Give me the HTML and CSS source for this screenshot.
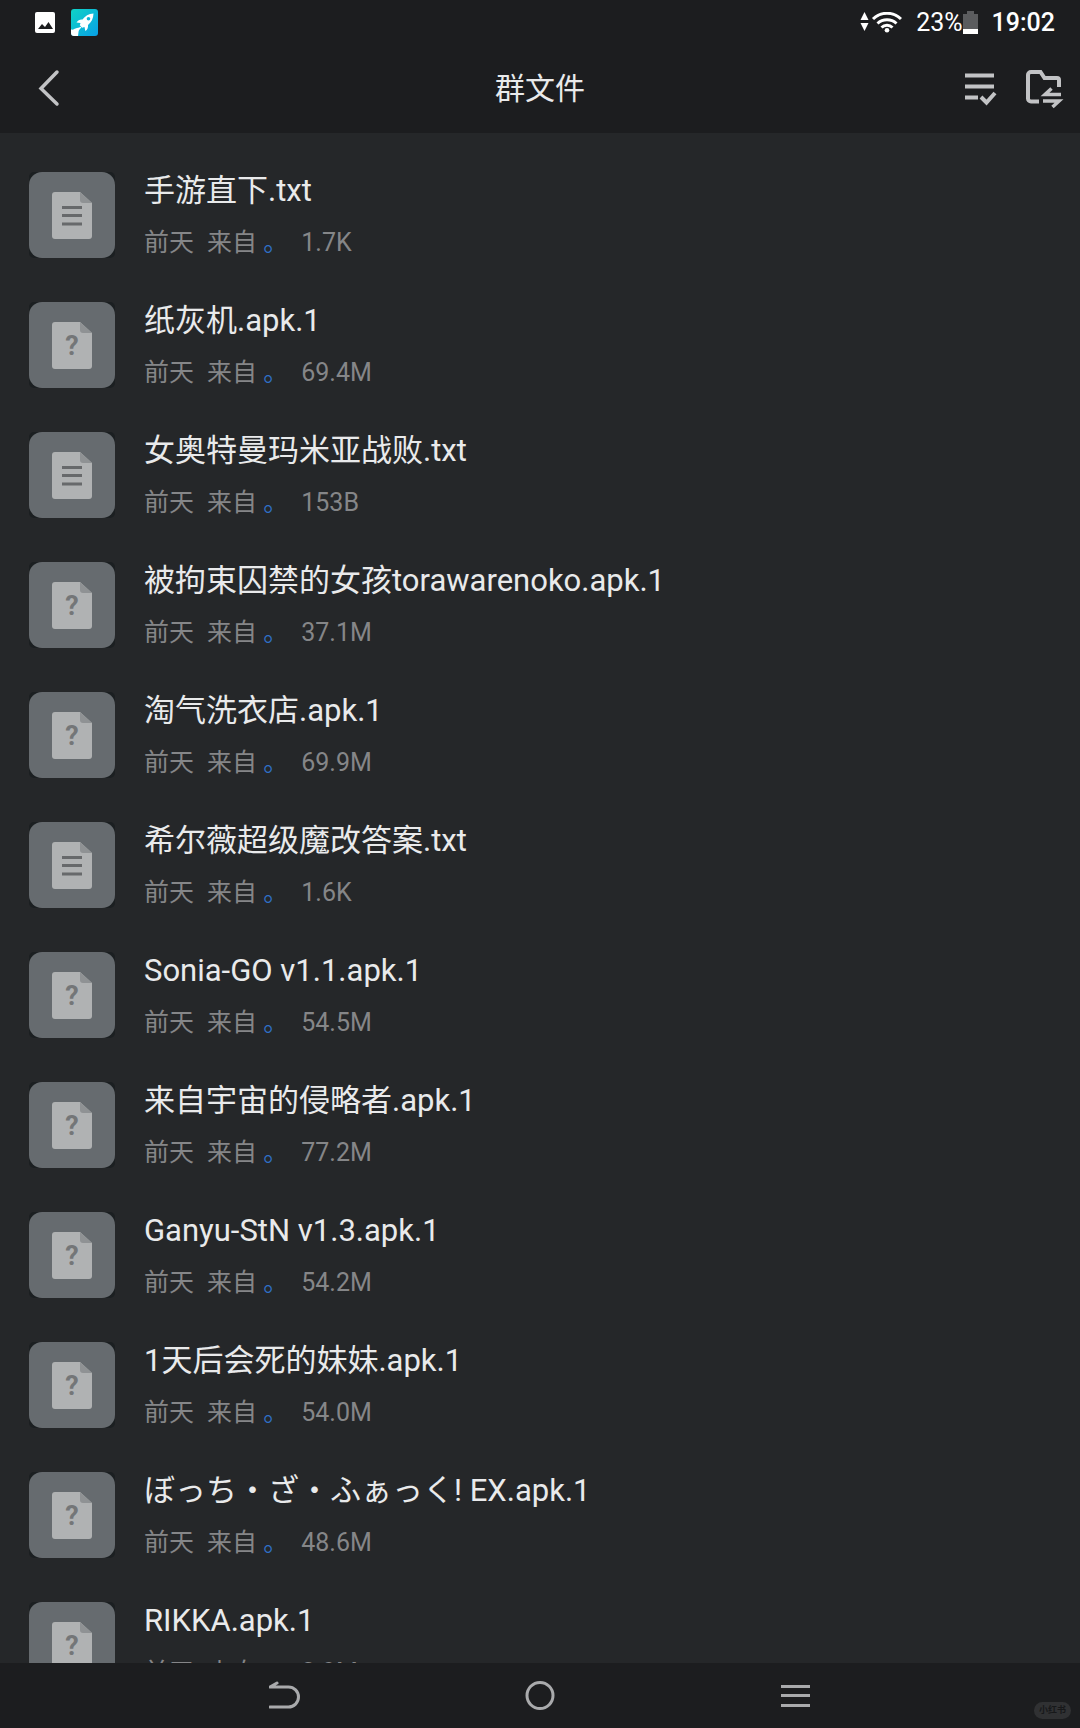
FILE: index.html
```html
<!DOCTYPE html>
<html lang="zh-CN">
	<head>
		<meta charset="UTF-8" />
		<meta name="viewport" content="width=device-width, initial-scale=1" />
		<title>群文件</title>
		<link rel="stylesheet" href="styles.css">
	</head>
	<body>
		<!-- file type icons -->
		<svg class="sprite" aria-hidden="true">
			<symbol id="tile" viewBox="0 0 86 86">
				<rect width="86" height="86" rx="5" fill="#1b1f21" />
				<rect width="86" height="86" rx="13" fill="#666b6f" />
				<path d="M26 20h25l12 11v33a3 3 0 0 1-3 3H26a3 3 0 0 1-3-3V23a3 3 0 0 1 3-3z" fill="#b0b2b3" />
				<path d="M51 20l12 11H54a3 3 0 0 1-3-3z" fill="#8f9294" />
			</symbol>
			<symbol id="txt" viewBox="0 0 86 86">
				<use href="#tile" />
				<path d="M33 35.500h20M33 43.500h20M33 52h20" stroke="#67696b" stroke-width="3" />
			</symbol>
			<symbol id="unknown" viewBox="0 0 86 86">
				<use href="#tile" />
				<text x="43" y="53" text-anchor="middle" class="mark">?</text>
			</symbol>
		</svg>

		<header class="top">
			<div class="status">
				<svg class="photo" viewBox="0 0 20 21" width="20" height="21">
					<rect width="20" height="21" rx="2" fill="#fff" />
					<path d="M3 17l4-5 3 3 3.500-5 4.500 7z" fill="#1c1d1f" />
				</svg>
				<svg class="rocket" viewBox="0 0 27 27" width="27" height="27">
					<defs>
						<linearGradient id="sky" x1="0" y1="0" x2="1" y2="1">
							<stop offset="0" stop-color="#0fd3c6" />
							<stop offset="1" stop-color="#08a0e6" />
						</linearGradient>
					</defs>
					<rect width="27" height="27" rx="3" fill="url(#sky)" />
					<path d="M22.500 4.500c-5 .3-8.500 2.500-11 6-2.500-.3-4.500.6-6 3l4 .6-.7 2.200 2.300 2.400 2.400-.6.8 4c2.200-1.500 3-3.700 2.700-6.200 3.300-2.600 5.400-6.200 5.500-11.400z" fill="#fff" />
					<circle cx="17.500" cy="9.800" r="1.800" fill="#0cb6d8" />
					<path d="M10.500 17.500c-1 3-2.500 2.500-3 5.500L7 27H3a3 3 0 0 1-3-3v-3.500c2.500.5 3-.5 4.500-1 2-.7 3.500-.5 6-2z" fill="#fff" />
				</svg>
				<svg class="wifi" viewBox="0 0 42 21" width="42" height="21">
					<path d="M4.500 0l4 8h-8zM4.500 19l4-8h-8z" fill="#fff" />
					<path d="M13 7a20 20 0 0 1 28 0M17.500 11.500a14 14 0 0 1 19 0M21.500 15.500a8 8 0 0 1 11 0" fill="none" stroke="#fff" stroke-width="3" />
					<circle cx="27" cy="18.200" r="2.300" fill="#fff" />
				</svg>
				<span class="power">23%</span>
				<svg class="battery" viewBox="0 0 15 23" width="15" height="23">
					<path d="M0 3h4V0h7v3h4v20H0z" fill="#5b5c5e" />
					<path d="M0 18h15v5H0z" fill="#fff" />
				</svg>
				<time class="clock">19:02</time>
			</div>
			<div class="bar">
				<button class="icon-btn" aria-label="返回">
					<svg viewBox="0 0 36 36" width="36" height="36" fill="none" stroke="#c2c3c5" stroke-width="3">
						<path d="M25 2L9 18.500L25 34" stroke-width="3.500" stroke-linecap="round" />
					</svg>
				</button>
				<h1>群文件</h1>
				<div class="actions">
					<button class="icon-btn" aria-label="多选">
						<svg viewBox="0 0 36 36" width="36" height="36" fill="none" stroke="#c2c3c5" stroke-width="4">
							<path d="M3 5.500h29M3 16.500h29M3 27.500h13M19 27l5.500 5.500L33 23" />
						</svg>
					</button>
					<button class="icon-btn" aria-label="传输列表">
						<svg viewBox="0 0 36 36" width="36" height="36" fill="none" stroke="#c2c3c5" stroke-width="4">
							<path d="M13 31.500H5a3 3 0 0 1-3-3V5a3 3 0 0 1 3-3h9.500l4 6H31a2 2 0 0 1 2 2v7" />
							<path d="M35 24.500H19l6.500-6M17 31h16l-6.500 6" stroke-width="3.500" />
						</svg>
					</button>
				</div>
			</div>
		</header>

		<main>
			<ul class="files">
				<li>
					<svg class="thumb"><use href="#txt" /></svg>
					<div class="info">
						<h2>手游直下.txt</h2>
						<p><span>前天</span><span>来自 <a href="#">。</a></span><span>1.7K</span></p>
					</div>
				</li>
				<li>
					<svg class="thumb"><use href="#unknown" /></svg>
					<div class="info">
						<h2>纸灰机.apk.1</h2>
						<p><span>前天</span><span>来自 <a href="#">。</a></span><span>69.4M</span></p>
					</div>
				</li>
				<li>
					<svg class="thumb"><use href="#txt" /></svg>
					<div class="info">
						<h2>女奥特曼玛米亚战败.txt</h2>
						<p><span>前天</span><span>来自 <a href="#">。</a></span><span>153B</span></p>
					</div>
				</li>
				<li>
					<svg class="thumb"><use href="#unknown" /></svg>
					<div class="info">
						<h2>被拘束囚禁的女孩torawarenoko.apk.1</h2>
						<p><span>前天</span><span>来自 <a href="#">。</a></span><span>37.1M</span></p>
					</div>
				</li>
				<li>
					<svg class="thumb"><use href="#unknown" /></svg>
					<div class="info">
						<h2>淘气洗衣店.apk.1</h2>
						<p><span>前天</span><span>来自 <a href="#">。</a></span><span>69.9M</span></p>
					</div>
				</li>
				<li>
					<svg class="thumb"><use href="#txt" /></svg>
					<div class="info">
						<h2>希尔薇超级魔改答案.txt</h2>
						<p><span>前天</span><span>来自 <a href="#">。</a></span><span>1.6K</span></p>
					</div>
				</li>
				<li>
					<svg class="thumb"><use href="#unknown" /></svg>
					<div class="info">
						<h2>Sonia-GO v1.1.apk.1</h2>
						<p><span>前天</span><span>来自 <a href="#">。</a></span><span>54.5M</span></p>
					</div>
				</li>
				<li>
					<svg class="thumb"><use href="#unknown" /></svg>
					<div class="info">
						<h2>来自宇宙的侵略者.apk.1</h2>
						<p><span>前天</span><span>来自 <a href="#">。</a></span><span>77.2M</span></p>
					</div>
				</li>
				<li>
					<svg class="thumb"><use href="#unknown" /></svg>
					<div class="info">
						<h2>Ganyu-StN v1.3.apk.1</h2>
						<p><span>前天</span><span>来自 <a href="#">。</a></span><span>54.2M</span></p>
					</div>
				</li>
				<li>
					<svg class="thumb"><use href="#unknown" /></svg>
					<div class="info">
						<h2>1天后会死的妹妹.apk.1</h2>
						<p><span>前天</span><span>来自 <a href="#">。</a></span><span>54.0M</span></p>
					</div>
				</li>
				<li>
					<svg class="thumb"><use href="#unknown" /></svg>
					<div class="info">
						<h2>ぼっち・ざ・ふぁっく! EX.apk.1</h2>
						<p><span>前天</span><span>来自 <a href="#">。</a></span><span>48.6M</span></p>
					</div>
				</li>
				<li>
					<svg class="thumb"><use href="#unknown" /></svg>
					<div class="info">
						<h2>RIKKA.apk.1</h2>
						<p><span>前天</span><span>来自 <a href="#">。</a></span><span>3.9M</span></p>
					</div>
				</li>
			</ul>
		</main>

		<nav class="keys">
			<button aria-label="后退">
				<svg viewBox="0 0 32 32" width="32" height="32" fill="none" stroke="#a9aaac" stroke-width="3" stroke-linecap="round" stroke-linejoin="round">
					<path d="M1 27h18.500a10 10 0 0 0 0-20H1L8 3" />
				</svg>
			</button>
			<button aria-label="主页">
				<svg viewBox="0 0 32 32" width="32" height="32" fill="none" stroke="#a9aaac" stroke-width="3">
					<circle cx="16" cy="15.500" r="13" />
				</svg>
			</button>
			<button aria-label="菜单">
				<svg viewBox="0 0 32 32" width="32" height="32" fill="none" stroke="#a9aaac" stroke-width="3">
					<path d="M2 6.500h29M2 15.500h29M2 25.500h29" />
				</svg>
			</button>
			<span class="badge">小红书</span>
		</nav>
	</body>
</html>
```
FILE: styles.css
```css
* {
	box-sizing: border-box;
}
body {
	display: flex;
	flex-direction: column;
	height: 100vh;
	margin: 0;
	background: #252729;
	color: #e9eaeb;
	font-family: Roboto, "Noto Sans CJK SC", sans-serif;
}
h1,
h2,
p,
ul {
	margin: 0;
	padding: 0;
	font-weight: 400;
}
button {
	padding: 0;
	border: 0;
	background: none;
	cursor: pointer;
}
svg {
	display: block;
	flex: none;
}
.sprite {
	position: absolute;
	width: 0;
	height: 0;
}

/* header */
.top {
	flex: none;
	background: #1c1d1f;
}
.status {
	display: flex;
	align-items: center;
	height: 44px;
	padding: 0 25px 0 35px;
	color: #fff;
	font-size: 25px;
}
.rocket {
	margin-left: 16px;
}
.wifi {
	margin-left: auto;
}
.power {
	margin-left: 14px;
}
.clock {
	margin-left: 14px;
	font-weight: 500;
}
.bar {
	display: grid;
	grid-template-columns: 1fr auto 1fr;
	align-items: center;
	height: 89px;
	padding: 0 18px 2px 32px;
}
.bar h1 {
	padding: 0 14px 4px 0;
	font-size: 30px;
}
.actions {
	display: flex;
	justify-content: flex-end;
	gap: 28px;
}
.icon-btn svg {
	overflow: visible;
}

/* file list */
main {
	flex: 1;
	min-height: 0;
	overflow: hidden;
}
.files {
	padding-top: 17px;
	list-style: none;
}
.files li {
	display: flex;
	align-items: center;
	gap: 29px;
	height: 130px;
	padding: 0 29px;
}
.thumb {
	width: 86px;
	height: 86px;
}
.mark {
	fill: #747678;
	font-size: 27px;
	font-weight: 700;
}
.info {
	padding-top: 2px;
}
.info h2 {
	font-size: 31px;
	line-height: 54px;
}
.info p {
	display: flex;
	gap: 13px;
	color: #858688;
	font-size: 25px;
	line-height: 50px;
}
.info a {
	color: #2f6fc4;
	text-decoration: none;
}

/* system keys */
.keys {
	position: relative;
	display: flex;
	flex: none;
	height: 65px;
	padding: 0 158px;
	background: #1c1d1f;
}
.keys button {
	display: flex;
	flex: 1;
	align-items: center;
	justify-content: center;
}
.badge {
	position: absolute;
	right: 9px;
	bottom: 9px;
	padding: 0 5px;
	border-radius: 9px;
	background: #303133;
	color: #17181a;
	font-size: 9px;
	font-weight: 700;
	line-height: 17px;
}
```
